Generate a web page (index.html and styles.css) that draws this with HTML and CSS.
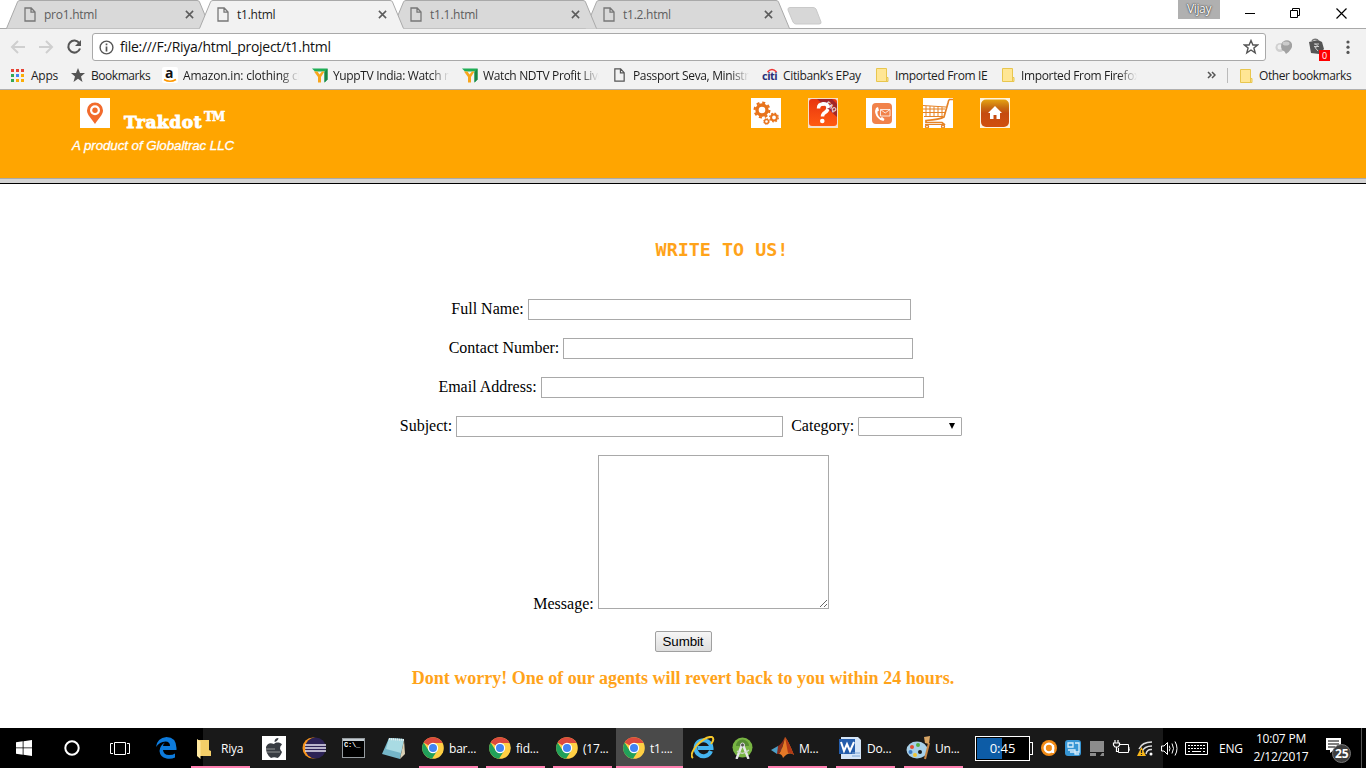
FILE: index.html
```html
<!DOCTYPE html>
<html lang="en">
<head>
<meta charset="utf-8">
<title>t1.html</title>
<link rel="stylesheet" href="styles.css">
</head>
<body>
<svg class="defs" width="0" height="0">
  <symbol id="page" viewBox="0 0 12 15"><path d="M1 1H7.2L11 5V14H1Z M7 1V5.2H11" fill="none" stroke="currentColor" stroke-width="1.3"/></symbol>
  <symbol id="close" viewBox="0 0 10 10"><path d="M1 1L9 9M9 1L1 9" stroke="#5c5c5c" stroke-width="1.7"/></symbol>
  <symbol id="tabshape" viewBox="0 0 205 29"><path d="M.5 28.5L11.5 2Q12 .5 14 .5H191Q193 .5 193.500 2L204.500 28.500" fill="#d9d9d9" stroke="#a9a9a9"/></symbol>
  <symbol id="folder" viewBox="0 0 13 14"><path d="M.5 .5H10.500V9.500H12V13.500H.5Z" fill="#ffe694" stroke="#e8c64e"/><path d="M10.500 9V13" stroke="#e8c64e"/></symbol>
  <symbol id="yupp" viewBox="0 0 16 15"><path d="M0 1H15.500V12L12.500 15V4H3Z" fill="#1fae55"/><path d="M12.500 5L15.500 1V12L12.500 15Z" fill="#188544"/><path d="M2 4H5.500L7.500 7L10 4H12.500L9 9.500V15H6V9.500Z" fill="#f9a51a"/></symbol>
  <symbol id="chrome" viewBox="0 0 22 22"><circle cx="11" cy="11" r="10.800" fill="#ffcf44"/><path d="M11 11L1.600 5.600A10.800 10.800 0 0 1 20.600 6H11Z" fill="#dc4a3d"/><path d="M11 11L6.700 13.500L1.600 5.600A10.800 10.800 0 0 0 10 21.800L15.300 13.500Z" fill="#21a05a"/><circle cx="11" cy="11" r="5.200" fill="#fff"/><circle cx="11" cy="11" r="4" fill="#4284f3"/></symbol>
</svg>

<header class="browser">
  <div class="tabstrip">
    <div class="tab first"><svg class="shape"><use href="#tabshape"/></svg><svg class="page"><use href="#page"/></svg><span>pro1.html</span><svg class="close"><use href="#close"/></svg></div>
    <div class="tab active"><svg class="shape" viewBox="0 0 205 29"><path d="M0 29L.5 28.500L11.500 2Q12 .5 14 .5H191Q193 .5 193.500 2L204.500 28.500L205 29Z" fill="#f2f2f2"/><path d="M.5 28.500L11.500 2Q12 .5 14 .5H191Q193 .5 193.500 2L204.500 28.500" fill="none" stroke="#a9a9a9"/></svg><svg class="page"><use href="#page"/></svg><span>t1.html</span><svg class="close"><use href="#close"/></svg></div>
    <div class="tab third"><svg class="shape"><use href="#tabshape"/></svg><svg class="page"><use href="#page"/></svg><span>t1.1.html</span><svg class="close"><use href="#close"/></svg></div>
    <div class="tab fourth"><svg class="shape"><use href="#tabshape"/></svg><svg class="page"><use href="#page"/></svg><span>t1.2.html</span><svg class="close"><use href="#close"/></svg></div>
    <svg class="newtab" viewBox="0 0 36 18"><path d="M3 .5H26Q28 .5 29 2L34 15Q34.500 17 32 17H9Q7 17 6 15L1 3Q.5 .5 3 .5Z" fill="#d7d7d7" stroke="#c9c9c9"/></svg>
    <div class="winbuttons">
      <span class="user">Vijay</span>
      <svg class="win" viewBox="0 0 180 28"><path d="M25 13.500H35" stroke="#000"/><path d="M70.500 10.500H77.500V17.500H70.500ZM72.500 10V8.500H79.500V15.500H78" fill="none" stroke="#000"/><path d="M116.500 8.500L126.500 18.500M126.500 8.500L116.500 18.500" stroke="#000" stroke-width="1.200"/></svg>
    </div>
  </div>

  <div class="toolbar">
    <svg class="nav" viewBox="0 0 92 32"><g fill="none" stroke="#cfcfcf" stroke-width="2"><path d="M25 18H12.500M18 12L12 18L18 24"/><path d="M39 18H51.500M46 12L52 18L46 24"/></g><path d="M79.300 14.200A6 6 0 1 0 80 19.500" fill="none" stroke="#555" stroke-width="2.100"/><path d="M81 11V17H75Z" fill="#555"/></svg>
    <div class="omnibox">
      <svg class="info" viewBox="0 0 15 15"><circle cx="7.500" cy="7.500" r="6.400" fill="none" stroke="#555" stroke-width="1.400"/><path d="M7.500 6.500V11.500M7.500 3.500V5.300" stroke="#555" stroke-width="1.700"/></svg>
      <span class="url">file:///F:/Riya/html_project/t1.html</span>
      <svg class="star" viewBox="0 0 16 16"><path d="M8 1.500L9.900 6H14.500L10.900 9L12.200 13.800L8 11L3.800 13.800L5.100 9L1.500 6H6.100Z" fill="none" stroke="#555" stroke-width="1.400"/></svg>
    </div>
    <svg class="ext" viewBox="0 0 100 33"><circle cx="14" cy="18.500" r="4.500" fill="#d0d0d0"/><circle cx="14" cy="18" r="2.500" fill="#eee"/><path d="M19 11.500A6 6 0 0 1 26 15Q27 20 20 25Q19 22 16 21Q13 14 19 11.500Z" fill="#a2a2a2"/><ellipse cx="20" cy="14.500" rx="3.500" ry="2" fill="#ccc"/><path d="M43 13L52 11L56 13L58 20L53 25L45 24Z" fill="#555"/><path d="M46 12Q48 9 52 11" fill="none" stroke="#777" stroke-width="1.500"/><path d="M48 15H53M48 17.500H53M49 15Q54 17 49 18.500L52 22" fill="none" stroke="#ccc"/><rect x="53" y="21" width="11" height="11" fill="#f00"/><text x="56" y="30" class="zero">0</text><g fill="#555"><circle cx="82" cy="13" r="1.600"/><circle cx="82" cy="18.200" r="1.600"/><circle cx="82" cy="23.400" r="1.600"/></g></svg>
  </div>

  <nav class="bookmarks">
    <a class="bm b1"><svg viewBox="0 0 14 14"><path d="M1 1H4V4H1ZM6 1H9V4H6ZM11 1H14V4H11Z" fill="#e74436"/><path d="M1 6H4V9H1ZM1 11H4V14H1Z" fill="#34a853"/><path d="M6 6H9V9H6Z" fill="#4285f4"/><path d="M11 6H14V9H11ZM6 11H9V14H6ZM11 11H14V14H11Z" fill="#fbad05"/></svg><span>Apps</span></a>
    <a class="bm b2"><svg viewBox="0 0 14 14"><path d="M7 0L9 5H14L10 8.500L11.500 14L7 10.800L2.500 14L4 8.500L0 5H5Z" fill="#555"/></svg><span>Bookmarks</span></a>
    <a class="bm b3"><svg viewBox="0 0 16 16"><rect width="16" height="16" rx="2" fill="#fff"/><text x="3" y="11" class="amz">a</text><path d="M2 12.500Q8 16 14 12.500" fill="none" stroke="#f90" stroke-width="1.500"/></svg><span class="fade">Amazon.in: clothing cl</span></a>
    <a class="bm b4"><svg><use href="#yupp"/></svg><span class="fade">YuppTV India: Watch m</span></a>
    <a class="bm b5"><svg><use href="#yupp"/></svg><span class="fade">Watch NDTV Profit Live</span></a>
    <a class="bm b6"><svg><use href="#page"/></svg><span class="fade">Passport Seva, Ministry</span></a>
    <a class="bm b7"><svg viewBox="0 0 17 14"><text x="0" y="12" class="citi">citi</text><path d="M5.500 4Q10 -1 14.500 4" fill="none" stroke="#e33" stroke-width="1.500"/></svg><span>Citibank’s EPay</span></a>
    <a class="bm b8"><svg><use href="#folder"/></svg><span>Imported From IE</span></a>
    <a class="bm b9"><svg><use href="#folder"/></svg><span class="fade">Imported From Firefox</span></a>
    <a class="bm b10"><svg viewBox="0 0 9 8"><path d="M1 1L4 4L1 7M5 1L8 4L5 7" fill="none" stroke="#555" stroke-width="1.500"/></svg></a>
    <a class="bm b11"><svg><use href="#folder"/></svg><span>Other bookmarks</span></a>
  </nav>
</header>

<section class="site-header">
  <div class="brand">
    <div class="brandrow">
      <svg class="pin" viewBox="0 0 30 30"><rect width="30" height="30" fill="#fff"/><path d="M15 4.500A8 8 0 0 0 7 12.500C7 17 12 21 15 26C18 21 23 17 23 12.500A8 8 0 0 0 15 4.500Z" fill="#f26b2c"/><circle cx="15" cy="12.300" r="5" fill="#fff"/><circle cx="15" cy="12.300" r="2.700" fill="#f26b2c"/></svg>
      <span class="name">Trakdot</span><span class="tm">TM</span>
    </div>
    <div class="tagline">A product of Globaltrac LLC</div>
  </div>
  <div class="site-icons">
    <svg viewBox="0 0 30 30"><rect width="30" height="30" fill="#fff"/><g fill="none" stroke="#e8731c"><circle cx="11" cy="12" r="5" stroke-width="3.400"/><circle cx="11" cy="12" r="7.400" stroke-width="2.200" stroke-dasharray="3 2.810"/><circle cx="23" cy="19.500" r="2.900" stroke-width="2"/><circle cx="23" cy="19.500" r="4.300" stroke-width="1.300" stroke-dasharray="1.700 1.680"/><circle cx="15.500" cy="23.500" r="2" stroke-width="1.300"/><circle cx="15.500" cy="23.500" r="2.900" stroke-width="1" stroke-dasharray="1.200 1.080"/></g></svg>
    <svg viewBox="0 0 30 30"><defs><linearGradient id="q" x1="0" y1="0" x2="0" y2="1"><stop offset="0" stop-color="#e8350f"/><stop offset="1" stop-color="#ff5a12"/></linearGradient></defs><rect width="30" height="30" fill="#f5dfca"/><rect x="1" y="1" width="28" height="27" rx="3" fill="url(#q)"/><path d="M10.500 10.500Q10.500 6 15 6Q20 6 20 10Q20 12.500 17 14.500Q14.500 16 14.500 18.500" fill="none" stroke="#fff" stroke-width="3.500"/><circle cx="14.300" cy="23" r="2.300" fill="#fff"/><path d="M9 1H24L29 6V19Z" fill="#8e1f30" opacity=".8"/><path d="M13.500 6Q20 5 20 10" fill="none" stroke="#fff" stroke-width="3.500"/><text transform="translate(17.500 6) rotate(43)" class="faq">FAQ</text></svg>
    <svg viewBox="0 0 30 30"><rect width="30" height="30" fill="#fff"/><rect x="6" y="5" width="20" height="21" rx="4" fill="#f1824a"/><path d="M10 10Q7.500 15 12 20Q14.500 23 17.500 23L18.500 21L16 19L14.500 20Q11 17 11.500 13.500L13 12.500L12 9Z" fill="#fff"/><path d="M14.500 11.500H24V18H14.500ZM14.500 11.500L19.200 15L24 11.500" fill="none" stroke="#fff" stroke-width=".8"/></svg>
    <svg viewBox="0 0 30 30"><rect width="30" height="30" fill="#fff"/><g fill="none" stroke="#e58225"><path d="M0 7.500L23 9M0 11H22M0 14.500H22M1 18.500H20M3 8V18M7 8V18M11 8.500V18M15 8.500V18M19 9V18"/><path d="M30 1.500H26.500Q25.500 2 25 5L21 19Q17 21.500 3 22.500V24.500H19L22 27" stroke-width="1.700"/><path d="M2 26.500H20" stroke-width="1"/><circle cx="4" cy="28.500" r="1.500" stroke-width="1.300"/><circle cx="20" cy="28.500" r="1.500" stroke-width="1.300"/></g></svg>
    <svg viewBox="0 0 30 30"><defs><linearGradient id="h" x1="0" y1="0" x2="0" y2="1"><stop offset="0" stop-color="#e5a313"/><stop offset=".3" stop-color="#c76a10"/><stop offset=".5" stop-color="#c54a10"/><stop offset="1" stop-color="#d0500f"/></linearGradient></defs><rect width="30" height="30" fill="#fff3dd"/><rect x="1" y="1.500" width="28" height="27.500" rx="5" fill="url(#h)"/><path d="M15 8L22 15H20V21H16.500V17H13.500V21H10V15H8Z" fill="#fff"/></svg>
  </div>
</section>

<main class="content">
  <h3 class="title">WRITE TO US!</h3>
  <form class="form">
    <div class="row"><label>Full Name:</label><input class="w383"></div>
    <div class="row"><label>Contact Number:</label><input class="w350"></div>
    <div class="row"><label>Email Address:</label><input class="w383"></div>
    <div class="row"><label>Subject:</label><input class="w327"><label class="cat">Category:</label><div class="select"><svg viewBox="0 0 6 6"><path d="M0 0H6L3 6Z"/></svg></div></div>
    <div class="row msg"><label>Message:</label><div class="area"><svg viewBox="0 0 9 9"><path d="M1 8L8 1M5 8L8 5" stroke="#555" stroke-width=".9"/></svg></div></div>
  </form>
  <button class="submit">Sumbit</button>
  <p class="note">Dont worry! One of our agents will revert back to you within 24 hours.</p>
</main>

<footer class="taskbar">
  <div class="c start"><svg viewBox="0 0 16 16"><path d="M0 2.300L6.700 1.300V7.500H0ZM7.500 1.200L16 0V7.500H7.500ZM0 8.300H6.700V14.700L0 13.700ZM7.500 8.300H16V16L7.500 14.800Z" fill="#fff"/></svg></div>
  <div class="c cort"><svg viewBox="0 0 16 16"><circle cx="8" cy="8" r="6.700" fill="none" stroke="#fff" stroke-width="2"/></svg></div>
  <div class="c view"><svg viewBox="0 0 20 16"><path d="M4.500 2.500H15.500V14.500H4.500ZM3 3.500H.5V13.500H3M17 3.500H19.500V13.500H17" fill="none" stroke="#fff"/></svg></div>
  <div class="c edge"><svg viewBox="0 0 21 22"><path d="M0 10Q1 1 10.500 0Q20 0 20.500 11V13H7Q7.500 18 13 18Q17 18 19 16.500V20.500Q15 22.500 10.500 21.500Q4 20 3.500 14Q4 8 9 5.500Q7 7 7 9H14Q14 4.500 9.500 4.500Q3.500 4.800 0 10Z" fill="#0d7bdc"/></svg></div>
  <div class="c run riya"><svg viewBox="0 0 14 21"><path d="M1 2H12V12L14 13V18H3L1 15Z" fill="#f4ce68"/><path d="M0 1L3.500 3.500V21L0 18Z" fill="#ffe8a0"/></svg><span>Riya</span></div>
  <div class="c apple"><svg viewBox="0 0 24 24"><rect width="24" height="24" fill="#fff"/><path d="M12 8C14 6 18 6 20 8.500Q16 12 20 16Q18 21 15.500 22Q12 20.500 9 22Q3.500 18 4 11Q6 5.500 12 8ZM12.500 6Q12.500 2 16.500 2Q16 5 12.500 6Z" fill="#383c42"/><path d="M4 13H13M5 16H18" stroke="#aaa" stroke-width=".8"/></svg></div>
  <div class="c ecl"><svg viewBox="0 0 24 22"><circle cx="11" cy="11" r="10.500" fill="#f7941e"/><circle cx="13.500" cy="11" r="10.500" fill="#2c2255"/><path d="M3 8H24M3 11H24M3 14H24" stroke="#e8e5f2" stroke-width="1.500"/></svg></div>
  <div class="c cmd"><svg viewBox="0 0 23 20"><rect x=".5" y=".5" width="22" height="19" fill="#000" stroke="#969ca0"/><path d="M1 2H22" stroke="#c4cdd2" stroke-width="2"/><text x="2" y="9" class="cm">C:\_</text></svg></div>
  <div class="c notep"><svg viewBox="0 0 23 22"><path d="M7 1L22 2L18 22L0 17Z" fill="#75b6c8"/><path d="M7 1L22 2L19 16L4 12Z" fill="#a9dbe3"/><path d="M7 2L22 3" stroke="#e9eeee" stroke-width="2" stroke-dasharray="1 1"/><path d="M18 22L22 3L23 17Z" fill="#d9d0b5"/></svg></div>
  <div class="c run ch1"><svg><use href="#chrome"/></svg><span>bar...</span></div>
  <div class="c run ch2"><svg><use href="#chrome"/></svg><span>fid...</span></div>
  <div class="c run ch3"><svg><use href="#chrome"/></svg><span>(17...</span></div>
  <div class="c run ch4"><svg><use href="#chrome"/></svg><span>t1....</span></div>
  <div class="c ie"><svg viewBox="0 0 24 24"><path d="M20 15A8 8 0 1 1 20.500 12H7" fill="none" stroke="#45b5ef" stroke-width="4"/><path d="M2 22Q-2 19 6 9Q15 0 21 1Q24 3 20 8" fill="none" stroke="#f5c72b" stroke-width="2"/></svg></div>
  <div class="c andr"><svg viewBox="0 0 21 22"><circle cx="10.500" cy="10.500" r="10" fill="#78b543"/><path d="M4 9A6.500 6.500 0 0 1 17 9Z" fill="#558c32"/><path d="M9.500 9L4.500 22M11.500 9L16.500 22" fill="none" stroke="#e6e8e9" stroke-width="2.400"/><path d="M5 14Q10.500 19 17 13" fill="none" stroke="#cfd5cc" stroke-width="1.200"/><circle cx="10.500" cy="8" r="2" fill="#555" stroke="#ddd"/></svg></div>
  <div class="c run mat"><svg viewBox="0 0 23 22"><path d="M0 13L7 9L11 12L6 17Z" fill="#4d9fc7"/><path d="M7 9Q10 8 14 0Q12 10 8 17L6 17Z" fill="#8c2d1b"/><path d="M14 0Q17 3 23 18Q18 14 12 21Q11 17 8 17Q12 11 14 0Z" fill="#e57927"/><path d="M14 0Q17 3 23 18Q19 15 17 16Z" fill="#b23816"/></svg><span>M...</span></div>
  <div class="c run word"><svg viewBox="0 0 22 22"><path d="M2 0H19L22 3V22H2Z" fill="#d5e5f7"/><path d="M0 2H16V17H0Z" fill="#245dac"/><path d="M2 5L5 14L8 7L11 14L15 5" fill="none" stroke="#fff" stroke-width="2"/><path d="M13 16H21M13 19H21" stroke="#7aa4d6"/></svg><span>Do...</span></div>
  <div class="c run paint"><svg viewBox="0 0 25 24"><ellipse cx="11" cy="14" rx="10.500" ry="8.500" fill="#a8d0e8"/><circle cx="6" cy="11" r="2" fill="#e24c32"/><circle cx="12" cy="9" r="2" fill="#54af45"/><circle cx="4.500" cy="16" r="2" fill="#3b7ac4"/><circle cx="9" cy="19" r="2" fill="#f2c430"/><circle cx="14" cy="16" r="2" fill="#1a1a1a"/><path d="M23 7L19 23" stroke="#c68544" stroke-width="2"/><path d="M18 1L24 0L23 8L19 7Z" fill="#d8a565"/></svg><span>Un...</span></div>
  <div class="c batt"><div class="cell"><span>0:45</span></div><i></i></div>
  <div class="c tray">
    <svg viewBox="0 0 129 40">
      <circle cx="9" cy="20" r="8" fill="#f28b16"/><circle cx="9" cy="20" r="4.300" fill="none" stroke="#fff" stroke-width="2.300"/><path d="M13 17V25" stroke="#fff" stroke-width="2.300"/>
      <g transform="translate(-9)">
      <rect x="34" y="12" width="16" height="16" rx="3" fill="#3796d5"/><path d="M37 15H42V19H37ZM44 15H48V24H39M37 22H44V26H48" fill="none" stroke="#d9eefb" stroke-width="1.300"/>
      <path d="M59 13H73V24H59ZM59 25H65V28H59ZM71 25H73V28H69Z" fill="#8c8c8c"/>
      <path d="M87.500 16.500H97.500V24.500H87.500ZM98 19V22H99" fill="none" stroke="#fff"/><rect x="83" y="14" width="6" height="6" fill="#1a1a1a"/><path d="M84 12V15M87 12V15M82.500 15H88.500V17L87 19H84L82.500 17ZM85.500 19V23.500H88" fill="none" stroke="#fff" stroke-width="1.200"/>
      <g fill="none" stroke="#ddd" stroke-width="1.400"><path d="M108 21Q111 14 121 14M111 24Q113 18 121 18M115 26Q116 21 121 21.500"/></g><circle cx="120" cy="26" r="1.500" fill="#fff"/><path d="M110.500 19L115 28H106Z" fill="#f9b719"/><path d="M110.500 22V25M110.500 26V27" stroke="#222" stroke-width="1.200"/>
      <path d="M130.500 18V23H133L136.500 26.500V14.500L133 18Z" fill="none" stroke="#fff"/>
      </g>
    </svg>
  </div>
  <div class="c sys"><svg viewBox="0 0 49 40"><path d="M0 17.500Q2 20.500 0 23.500M3 15.500Q6 20.500 3 25.500M6 13.500Q10 20.500 6 27.500" fill="none" stroke="#fff"/><path d="M16.500 14.500H38.500V26.500H16.500Z" fill="none" stroke="#fff"/><path d="M19 17.500H37M19 20.500H37" stroke="#fff" stroke-dasharray="2 1"/><path d="M19 23.500H21M23 23.500H32M34 23.500H36" stroke="#fff"/></svg></div>
  <div class="c eng">ENG</div>
  <div class="c clock"><span>10:07 PM</span><span>2/12/2017</span></div>
  <div class="c notif"><svg viewBox="0 0 28 26"><path d="M1 1H16V13H9L5 16V13H1Z" fill="#fff"/><path d="M3 4H14M3 7H14M3 10H10" stroke="#000"/><circle cx="16.500" cy="16.500" r="9" fill="#3d3d3d" stroke="#777"/><text x="10" y="21" class="n25">25</text></svg></div>
</footer>
</body>
</html>
```
FILE: styles.css
```css
* { box-sizing: border-box; }
body { margin: 0; width: 1366px; height: 768px; overflow: hidden; background: #fff; display: flex; flex-direction: column; font-family: "Liberation Serif", serif; }
svg { display: block; flex: none; }
.defs { position: absolute; }

/* Browser chrome */
.browser { height: 90px; flex: none; background: #f2f2f2; border-bottom: 1px solid #b0b0b0; font-family: "Open Sans", sans-serif; font-size: 12px; letter-spacing: -.35px; display: flex; flex-direction: column; }
.tabstrip { height: 29px; background: #fff; border-bottom: 1px solid #a9a9a9; display: flex; padding-left: 6px; }
.tab { position: relative; width: 205px; height: 29px; margin-right: -12px; display: flex; align-items: center; padding: 0 0 0 18px; color: #5d5d5d; }
.tab .shape { position: absolute; left: 0; top: 0; width: 205px; height: 29px; }
.tab .page { position: relative; width: 12px; height: 15px; color: #777; }
.tab span { position: relative; flex: 1; margin-left: 8px; letter-spacing: -.25px; }
.tab .close { position: relative; width: 9px; height: 9px; margin-right: 17px; }
.tab.active { z-index: 4; color: #222; }
.tab.third { z-index: 3; }
.tab.fourth { z-index: 2; }
.newtab { width: 36px; height: 18px; margin: 7px 0 0 9px; }
.winbuttons { display: flex; margin-left: auto; }
.user { width: 42px; height: 19px; background: #b0b0b0; color: #fff; text-align: center; line-height: 18px; text-shadow: 0 0 2px #333, 0 0 1px #333; }
.win { width: 180px; height: 28px; margin-right: -34px; }
.toolbar { height: 33px; display: flex; }
.nav { width: 92px; height: 32px; }
.omnibox { width: 1174px; height: 28px; margin-top: 4px; background: #fff; border: 1px solid #a9a9a9; border-radius: 3px; display: flex; align-items: center; padding: 0 6px 0 6px; }
.info { width: 15px; height: 15px; }
.url { flex: 1; margin-left: 6px; font-size: 14px; letter-spacing: -.28px; line-height: 18px; color: #111; }
.star { width: 16px; height: 16px; }
.ext { width: 100px; height: 33px; }
.zero { font: 9px "Open Sans", sans-serif; fill: #fff; }
.bookmarks { height: 27px; display: flex; padding-left: 10px; color: #1d1d1d; }
.bm { display: flex; align-items: center; flex: none; white-space: nowrap; height: 26px; }
.bm svg { width: 14px; height: 14px; }
.bm span { margin-left: 7px; }
.fade { width: 116px; overflow: hidden; -webkit-mask-image: linear-gradient(90deg, #000 84%, transparent); mask-image: linear-gradient(90deg, #000 84%, transparent); }
.b1 { width: 61px; letter-spacing: -.25px; }
.b2 { width: 91px; }
.b2 span { margin-left: 6px; letter-spacing: -.55px; letter-spacing: -.45px; }
.b3 { width: 150px; }
.b3 svg, .b4 svg, .b5 svg { width: 16px; height: 16px; }
.b3 span, .b4 span, .b5 span { margin-left: 5px; }
.b3 { letter-spacing: -.2px; }
.b4 { width: 150px; }
.b5 { width: 151px; }
.b6 { width: 149px; }
.b6 svg { width: 13px; color: #555; }
.b7 { width: 114px; }
.b7 svg { width: 17px; }
.b7 span { margin-left: 4px; }
.b8 { width: 126px; }
.b8 svg, .b9 svg, .b11 svg { width: 13px; }
.b8 span, .b9 span, .b11 span { margin-left: 6px; }
.b9 { width: 205px; }
.b10 { width: 20px; }
.b10 svg { width: 9px; height: 8px; }
.b11 { border-left: 1px solid #bbb; height: 15px; margin-top: 6px; padding-left: 12px; letter-spacing: -.42px; }
.amz { font: bold 14px "Open Sans", sans-serif; fill: #111; }
.citi { font: bold 11px "Open Sans", sans-serif; fill: #293078; letter-spacing: -.5px; }

/* Site header */
.site-header { height: 94px; flex: none; background: #ffa500; border-bottom: 1px solid #000; box-shadow: inset 0 -4px #d3d3d3, inset 0 -5px #a9a9a9; display: flex; padding: 8px 0 0 72px; color: #fff; }
.brand { width: 679px; }
.brandrow { display: flex; height: 39px; padding-left: 8px; }
.pin { width: 30px; height: 30px; }
.name { width: 80px; margin: 12px 0 0 14px; font: bold 17px/24px "DejaVu Serif", serif; letter-spacing: .55px; -webkit-text-stroke: .9px #fff; }
.tm { margin-top: 9px; font: bold 12px/20px "DejaVu Serif", serif; letter-spacing: -1px; -webkit-text-stroke: .5px #fff; }
.tagline { font: italic 13.330px/18px "Liberation Sans", sans-serif; letter-spacing: -.07px; -webkit-text-stroke: .3px #fff; white-space: nowrap; }
.site-icons { display: flex; gap: 27.300px; }
.site-icons svg { width: 30px; height: 30px; }
.faq { font: bold 6px "Liberation Sans", sans-serif; fill: #fff; }

/* Contact form */
.content { height: 544px; flex: none; display: flex; flex-direction: column; align-items: center; }
.title { margin: 55px 0 38px 78px; font: bold 18.400px/22px "DejaVu Sans Mono", monospace; color: #ffa31a; white-space: nowrap; }
.form { display: flex; flex-direction: column; align-items: center; gap: 18px; padding-right: 4px; }
.row { height: 21px; display: flex; align-items: center; font-size: 16px; line-height: 18px; }
.row label { margin-right: 4px; padding-bottom: 2px; }
.row input { height: 21px; border: 1px solid #a9a9a9; background: #fff; padding: 0; }
.w383 { width: 383px; }
.w350 { width: 350px; }
.w327 { width: 327px; }
.row .cat { margin-left: 8px; }
.select { width: 104px; height: 19px; border: 1px solid #a9a9a9; border-radius: 1px; display: flex; align-items: center; justify-content: flex-end; padding: 0 6px 1px 0; }
.select svg { width: 6px; height: 6px; }
.msg { height: 158px; align-items: flex-end; }
.msg label { padding-bottom: 0; }
.area { width: 231px; height: 154px; margin-bottom: 4px; border: 1px solid #a9a9a9; display: flex; align-items: flex-end; justify-content: flex-end; }
.area svg { width: 9px; height: 9px; }
.submit { width: 57px; height: 21px; margin-top: 18px; padding: 0; border: 1px solid #a0a0a0; border-radius: 2px; background: linear-gradient(#f6f6f6, #dedede); font: 13.330px/17px "Liberation Sans", sans-serif; letter-spacing: -.1px; color: #000; }
.note { margin: 16px 0 0; font-weight: bold; font-size: 18px; line-height: 21px; color: #ffa31a; white-space: nowrap; }

/* Taskbar */
.taskbar { height: 40px; flex: none; display: flex; background: linear-gradient(90deg, #000 203px, #191919 203px, #191919 1163px, #000 1163px); color: #fff; font: 12px "Open Sans", sans-serif; letter-spacing: -.2px; }
.c { display: flex; align-items: center; flex: none; white-space: nowrap; height: 40px; }
.run { border-bottom: 2px solid #ff7fb0; padding-top: 2px; }
.start { width: 64px; padding-left: 16px; }
.start svg, .cort svg { width: 16px; height: 16px; }
.cort { width: 46px; }
.view { width: 46px; }
.view svg { width: 20px; height: 16px; }
.edge { width: 35px; }
.edge svg { width: 21px; height: 22px; }
.riya { width: 59px; padding-left: 6px; }
.riya svg { width: 14px; height: 21px; }
.apple { width: 52px; padding-left: 12px; }
.apple svg { width: 24px; height: 24px; }
.ecl { width: 40px; }
.ecl svg { width: 24px; height: 22px; }
.cmd { width: 40px; }
.cmd svg { width: 23px; height: 20px; }
.cm { font: bold 7px "Liberation Mono", monospace; fill: #fff; }
.notep { width: 37px; }
.notep svg { width: 23px; height: 22px; }
.ch1, .ch2, .ch3 { width: 59px; padding-left: 3px; }
.ch1, .ch2 { margin-right: 8px; }
.ch3 { margin-right: 4px; }
.ch4 { width: 67px; padding-left: 7px; background: #4a4a4a; }
.run svg + span { margin-left: 5px; }
.riya svg + span { margin-left: 10px; }
.ch1 svg, .ch2 svg, .ch3 svg, .ch4 svg { width: 22px; height: 22px; }
.ie { width: 49px; padding-left: 8px; }
.ie svg { width: 24px; height: 24px; }
.andr { width: 36px; }
.andr svg { width: 21px; height: 22px; }
.mat, .word, .paint { width: 59px; padding-left: 3px; }
.mat { margin-right: 9px; }
.mat svg { width: 23px; height: 22px; }
.word { margin-right: 9px; }
.word svg { width: 22px; height: 22px; }
.word svg + span { margin-left: 6px; }
.paint svg { width: 25px; height: 24px; }
.paint { padding-left: 2px; }
.paint svg + span { margin-left: 4px; }
.batt { width: 59px; margin-left: 12px; margin-right: 10px; }
.cell { width: 55px; height: 25px; border: 1px solid #fff; background: linear-gradient(90deg, #0d5ca6 26px, #000 26px); box-shadow: inset 0 0 0 1px #000; display: flex; align-items: center; justify-content: center; font-size: 13px; letter-spacing: 0; }
.batt i { width: 3px; height: 13px; border: 1px solid #fff; border-left: 0; }
.tray { width: 129px; margin-left: -4px; }
.tray svg { width: 129px; height: 40px; }
.sys { width: 50px; }
.sys svg { width: 49px; height: 40px; }
.eng { width: 35px; }
.clock { width: 54px; flex-direction: column; justify-content: center; align-items: center; line-height: 18px; }
.notif { width: 54px; padding: 4px 0 0 17px; border-right: 1px solid #555; }
.notif svg { width: 28px; height: 26px; }
.n25 { font: bold 12px "Open Sans", sans-serif; fill: #fff; }
```
